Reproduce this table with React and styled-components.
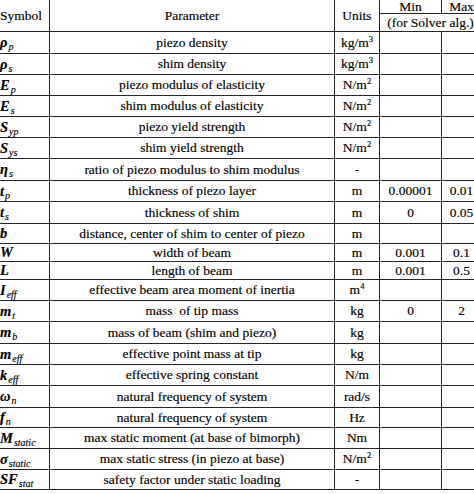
import React from "react";
import styled, { createGlobalStyle } from "styled-components";

const Global = createGlobalStyle`
  html, body { margin: 0; padding: 0; background: #fff; overflow: hidden; }
  body { font-family: "Liberation Serif", "Times New Roman", serif; color: #000; }
`;

const LINE = "1px solid #262626";

const Page = styled.div`
  width: 474px;
  height: 494px;
  overflow: hidden;
  background: #fff;
`;

const Grid = styled.div`
  display: grid;
  grid-template-columns: 53px 285px 45px 62px 40px;
  grid-template-rows: ${(p) => p.$rows};
  margin-left: -4px;
  width: max-content;
  border-left: ${LINE};
  font-size: 13.5px;
  -webkit-text-stroke: 0.15px #000;
`;

const Cell = styled.div`
  box-sizing: border-box;
  border-right: ${LINE};
  border-bottom: ${LINE};
  display: flex;
  align-items: center;
  justify-content: ${(p) => (p.$left ? "flex-start" : "center")};
  padding-left: ${(p) => (p.$left ? "3px" : "0")};
  white-space: pre;
  line-height: 1;
  overflow: hidden;
  grid-row: ${(p) => p.$row || "auto"};
  grid-column: ${(p) => p.$col || "auto"};
`;

const Sym = styled.span`
  font-weight: bold;
  font-style: italic;
  font-size: 14.5px;
  white-space: nowrap;
`;

const Sub = styled.span`
  font-weight: normal;
  font-style: italic;
  font-size: 10px;
  position: relative;
  top: 3px;
  margin-left: 1px;
`;

const Sup = styled.span`
  font-size: 8.5px;
  position: relative;
  top: -5px;
`;

const N2 = ["N/m", "2"];
const rows = [
  { s: "ρ", sub: "p", p: "piezo density", u: ["kg/m", "3"] },
  { s: "ρ", sub: "s", p: "shim density", u: ["kg/m", "3"] },
  { s: "E", sub: "p", p: "piezo modulus of elasticity", u: N2 },
  { s: "E", sub: "s", p: "shim modulus of elasticity", u: N2 },
  { s: "S", sub: "yp", p: "piezo yield strength", u: N2 },
  { s: "S", sub: "ys", p: "shim yield strength", u: N2 },
  { s: "η", sub: "s", p: "ratio of piezo modulus to shim modulus", u: "-" },
  { s: "t", sub: "p", p: "thickness of piezo layer", u: "m", min: "0.00001", max: "0.01" },
  { s: "t", sub: "s", p: "thickness of shim", u: "m", min: "0", max: "0.05" },
  { s: "b", p: "distance, center of shim to center of piezo", u: "m" },
  { s: "W", p: "width of beam", u: "m", min: "0.001", max: "0.1" },
  { s: "L", p: "length of beam", u: "m", min: "0.001", max: "0.5" },
  { s: "I", sub: "eff", p: "effective beam area moment of inertia", u: ["m", "4"] },
  { s: "m", sub: "t", p: "mass  of tip mass", u: "kg", min: "0", max: "2" },
  { s: "m", sub: "b", p: "mass of beam (shim and piezo)", u: "kg" },
  { s: "m", sub: "eff", p: "effective point mass at tip", u: "kg" },
  { s: "k", sub: "eff", p: "effective spring constant", u: "N/m" },
  { s: "ω", sub: "n", p: "natural frequency of system", u: "rad/s" },
  { s: "f", sub: "n", p: "natural frequency of system", u: "Hz" },
  { s: "M", sub: "static", p: "max static moment (at base of bimorph)", u: "Nm" },
  { s: "σ", sub: "static", p: "max static stress (in piezo at base)", u: N2 },
  { s: "SF", sub: "stat", p: "safety factor under static loading", u: "-" },
];

const heights = [22, 21, 21, 21, 21, 21, 22, 21, 22, 20, 18, 18, 21, 21, 22, 21, 21, 22, 20, 21, 21, 20];
const rowTemplate = ["14px", "18px", ...heights.map((h) => `${h}px`)].join(" ");

const Unit = ({ u }) =>
  Array.isArray(u) ? (
    <span>
      {u[0]}
      <Sup>{u[1]}</Sup>
    </span>
  ) : (
    <span>{u}</span>
  );

export default function App() {
  return (
    <Page>
      <Global />
      <Grid $rows={rowTemplate}>
        <Cell $row="1 / 3" $col="1" $left>Symbol</Cell>
        <Cell $row="1 / 3" $col="2">Parameter</Cell>
        <Cell $row="1 / 3" $col="3">Units</Cell>
        <Cell $row="1" $col="4">Min</Cell>
        <Cell $row="1" $col="5">Max</Cell>
        <Cell $row="2" $col="4 / 6">(for Solver alg.)</Cell>
        {rows.map((r, i) => (
          <React.Fragment key={i}>
            <Cell $left>
              <Sym>
                {r.s}
                {r.sub && <Sub>{r.sub}</Sub>}
              </Sym>
            </Cell>
            <Cell>{r.p}</Cell>
            <Cell>
              <Unit u={r.u} />
            </Cell>
            <Cell>{r.min || ""}</Cell>
            <Cell>{r.max || ""}</Cell>
          </React.Fragment>
        ))}
      </Grid>
    </Page>
  );
}
